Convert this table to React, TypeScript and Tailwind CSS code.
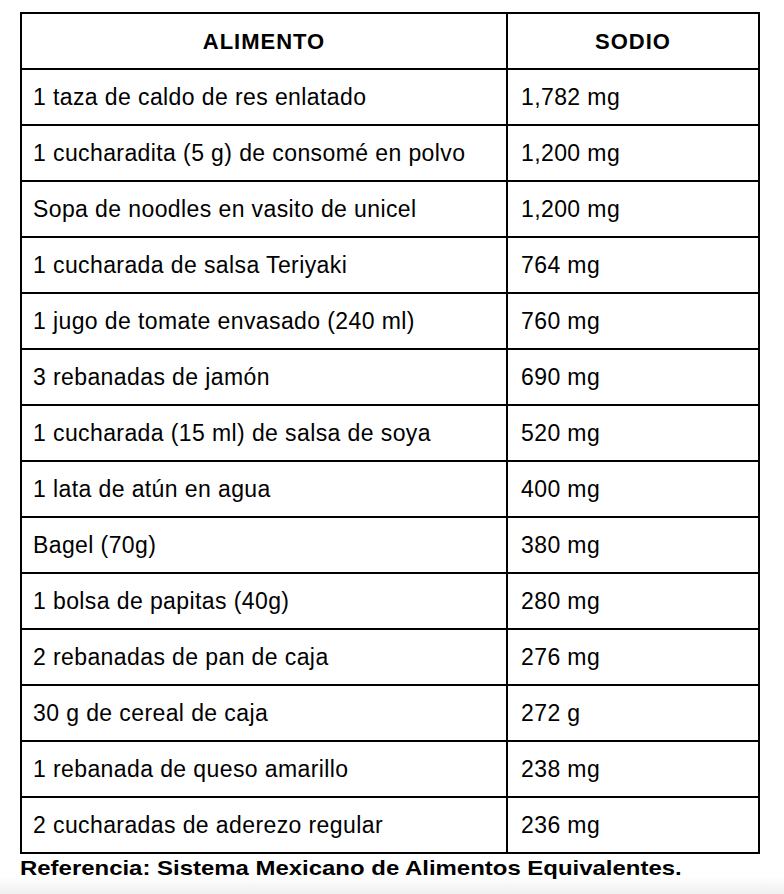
const rows: [string, string][] = [
  ['1 taza de caldo de res enlatado', '1,782 mg'],
  ['1 cucharadita (5 g) de consomé en polvo', '1,200 mg'],
  ['Sopa de noodles en vasito de unicel', '1,200 mg'],
  ['1 cucharada de salsa Teriyaki', '764 mg'],
  ['1 jugo de tomate envasado (240 ml)', '760 mg'],
  ['3 rebanadas de jamón', '690 mg'],
  ['1 cucharada (15 ml) de salsa de soya', '520 mg'],
  ['1 lata de atún en agua', '400 mg'],
  ['Bagel (70g)', '380 mg'],
  ['1 bolsa de papitas (40g)', '280 mg'],
  ['2 rebanadas de pan de caja', '276 mg'],
  ['30 g de cereal de caja', '272 g'],
  ['1 rebanada de queso amarillo', '238 mg'],
  ['2 cucharadas de aderezo regular', '236 mg'],
];

export default function App() {
  return (
    <div className="w-[784px] h-[894px] overflow-hidden bg-white text-black font-['Liberation_Sans',Arial,sans-serif] flex flex-col">
      <div className="pt-[12px] pl-[20px]">
        <table className="table-fixed border-collapse w-[738px] text-[23px] tracking-[0.4px]">
          <colgroup>
            <col className="w-[486px]" />
            <col className="w-[252px]" />
          </colgroup>
          <thead>
            <tr className="h-[56px]">
              <th className="border-2 border-black text-center font-bold text-[22px] tracking-[1px]">ALIMENTO</th>
              <th className="border-2 border-black text-center font-bold text-[22px] tracking-[1px]">SODIO</th>
            </tr>
          </thead>
          <tbody>
            {rows.map(([food, sodium]) => (
              <tr key={food} className="h-[56px]">
                <td className="border-2 border-black pl-[11px] align-middle whitespace-nowrap">{food}</td>
                <td className="border-2 border-black pl-[13px] align-middle whitespace-nowrap">{sodium}</td>
              </tr>
            ))}
          </tbody>
        </table>
      </div>
      <div className="flex-1 pl-[20px] bg-gradient-to-b from-white from-55% to-[#f0f0f0]">
        <p className="w-max mt-[2px] font-bold text-[21px] leading-[24px] whitespace-nowrap origin-left scale-x-[1.14]">
          Referencia: Sistema Mexicano de Alimentos Equivalentes.
        </p>
      </div>
    </div>
  );
}
